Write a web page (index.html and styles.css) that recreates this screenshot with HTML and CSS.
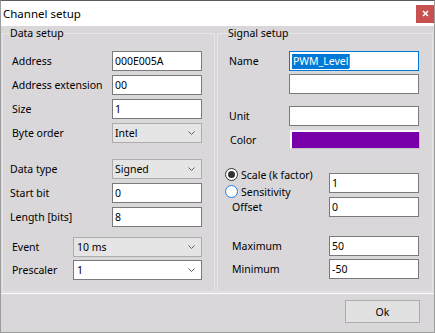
FILE: index.html
```html
<!DOCTYPE html>
<html lang="en">
<head>
    <meta charset="UTF-8">
    <meta name="viewport" content="width=device-width, initial-scale=1.0">
    <title>Channel setup</title>
    <link rel="stylesheet" href="styles.css">
</head>
<body>

    <div class="window">
        <div class="titlebar">
            <span class="title">Channel setup</span>
            <span class="close">
                <svg width="7" height="7" viewBox="0 0 7 7"><path d="M1 1 L6 6 M6 1 L1 6" stroke="#fff" stroke-width="1.6" fill="none"/></svg>
            </span>
        </div>

        <div class="content">
            <fieldset class="group group-data">
                <legend>Data setup</legend>

                <div class="section sec-address">
                    <div class="row"><label>Address</label><div class="field">000E005A</div></div>
                    <div class="row"><label>Address extension</label><div class="field">00</div></div>
                    <div class="row"><label>Size</label><div class="field">1</div></div>
                    <div class="row"><label>Byte order</label><div class="combo"><span>Intel</span><svg width="7" height="4"><path d="M0.5 0.5 L3.5 3.5 L6.5 0.5" stroke="#606060" fill="none"/></svg></div></div>
                </div>

                <div class="section sec-type">
                    <div class="row"><label>Data type</label><div class="combo"><span>Signed</span><svg width="7" height="4"><path d="M0.5 0.5 L3.5 3.5 L6.5 0.5" stroke="#606060" fill="none"/></svg></div></div>
                    <div class="row"><label>Start bit</label><div class="field">0</div></div>
                    <div class="row"><label>Length [bits]</label><div class="field">8</div></div>
                </div>

                <div class="section sec-event">
                    <div class="row"><label>Event</label><div class="combo wide"><span>10 ms</span><svg width="7" height="4"><path d="M0.5 0.5 L3.5 3.5 L6.5 0.5" stroke="#606060" fill="none"/></svg></div></div>
                    <div class="row"><label>Prescaler</label><div class="combo wide editable"><span>1</span><svg width="7" height="4"><path d="M0.5 0.5 L3.5 3.5 L6.5 0.5" stroke="#606060" fill="none"/></svg></div></div>
                </div>
            </fieldset>

            <fieldset class="group group-signal">
                <legend>Signal setup</legend>

                <div class="section sec-name">
                    <div class="row"><label>Name</label><div class="field focused"><span class="selected">PWM_Level</span><span class="caret"></span></div></div>
                    <div class="row"><label></label><div class="field"></div></div>
                </div>

                <div class="section sec-unit">
                    <div class="row"><label>Unit</label><div class="field"></div></div>
                    <div class="row color-row"><label>Color</label><div class="swatch"></div></div>
                </div>

                <div class="scale-block">
                    <div class="radios">
                        <div class="radio-row"><span class="radio checked"></span>Scale (k factor)</div>
                        <div class="radio-row"><span class="radio hover"></span>Sensitivity</div>
                    </div>
                    <div class="field small">1</div>
                </div>

                <div class="section sec-offset">
                    <div class="row"><label>Offset</label><div class="field small">0</div></div>
                </div>

                <div class="section sec-limits">
                    <div class="row"><label>Maximum</label><div class="field small">50</div></div>
                    <div class="row"><label>Minimum</label><div class="field small">-50</div></div>
                </div>
            </fieldset>
        </div>

        <div class="footer">
            <button class="ok">Ok</button>
        </div>
    </div>

</body>
</html>
```

FILE: styles.css
```css
/* General styling */
body {
    margin: 0;
    font-family: "Noto Sans", sans-serif;
    font-size: 10.5px;
    color: #000;
    background-color: #d9d7d9;
}

.window {
    width: 435px;
    height: 333px;
    box-sizing: border-box;
    border: 1px solid #9c9c9c;
    border-top-color: #5c5c5c;
    background-color: #d9d7d9;
    display: flex;
    flex-direction: column;
}

/* Title bar */
.titlebar {
    height: 25px;
    flex: none;
    background: #fff;
    display: flex;
    align-items: center;
    justify-content: space-between;
    padding-left: 2px;
}

.title {
    font-size: 11.5px;
}

.close {
    width: 18px;
    height: 18px;
    background: #c75050;
    display: flex;
    align-items: center;
    justify-content: center;
}

/* Group boxes */
.content {
    height: 267px;
    flex: none;
    display: flex;
    gap: 2px;
    padding-left: 1px;
    box-sizing: border-box;
}

.group {
    margin: 0;
    padding: 0;
    min-width: 0;
    height: 266px;
    box-sizing: border-box;
    border: 1px solid #e7e5e7;
}

.group-data {
    width: 213px;
}

.group-signal {
    width: 216px;
}

.group legend {
    margin-left: 6px;
    padding: 0 1px;
    line-height: 14px;
}

.group-signal legend {
    margin-left: 9px;
}

.section {
    display: flex;
    flex-direction: column;
    gap: 4px;
}

.row {
    display: flex;
    align-items: center;
    height: 20px;
}

.row label {
    flex: none;
}

/* Data setup rows */
.group-data .row label {
    width: 100px;
    padding-left: 9px;
}

.sec-address {
    margin-top: 11px;
}

.sec-type {
    margin-top: 16px;
}

.group-data .sec-type .row label {
    width: 102px;
    padding-left: 7px;
}

.sec-event {
    margin-top: 10px;
    gap: 3px;
}

.group-data .sec-event .row label {
    width: 61px;
}

/* Inputs */
.field,
.combo {
    width: 90px;
    height: 20px;
    box-sizing: border-box;
    border: 1px solid #7a7a7a;
    background: #fff;
    padding: 0 2px;
    line-height: 18px;
    display: flex;
    align-items: center;
}

.combo {
    justify-content: space-between;
    padding-right: 6px;
    border-color: #adadad;
    background: #e5e5e5;
}

.combo.wide {
    width: 129px;
    padding-left: 3px;
}

.combo.editable {
    background: #fff;
    border-color: #7a7a7a;
}

.field.focused {
    border-color: #0078d7;
}

.selected {
    background: #0078d7;
    color: #fff;
    padding: 0 1px 0 1px;
    line-height: 15px;
}

.caret {
    width: 1px;
    height: 14px;
    background: #d5741f;
}

/* Signal setup rows */
.group-signal .row label {
    width: 60px;
    padding-left: 11px;
}

.group-signal .field {
    width: 130px;
}

.sec-name {
    margin-top: 11px;
    gap: 3px;
}

.sec-unit {
    margin-top: 12px;
}

.color-row {
    height: 19px;
}

.group-signal .color-row label {
    padding-left: 12px;
}

.swatch {
    width: 130px;
    height: 19px;
    box-sizing: border-box;
    background: #7900a8;
    border-top: 2px solid #fbfbfb;
    border-left: 2px solid #fbfbfb;
    border-right: 1px solid #c4c2c4;
    border-bottom: 1px solid #c4c2c4;
}

.scale-block {
    display: flex;
    margin-top: 17px;
}

.radios {
    flex: none;
    width: 111px;
    height: 31px;
    padding-left: 7px;
    box-sizing: border-box;
}

.radio-row {
    height: 17px;
    display: flex;
    align-items: center;
    gap: 3px;
}

.radio {
    width: 13px;
    height: 13px;
    box-sizing: border-box;
    border-radius: 50%;
    border: 1px solid #333;
    background: #fff;
    display: flex;
    align-items: center;
    justify-content: center;
}

.radio.checked::after {
    content: "";
    width: 7px;
    height: 7px;
    border-radius: 50%;
    background: #333;
}

.radio.hover {
    border-color: #1e7fd8;
}

.group-signal .field.small {
    width: 90px;
}

.scale-block .field {
    margin-top: 7px;
}

.group-signal .sec-offset .row label,
.group-signal .sec-limits .row label {
    width: 97px;
    padding-left: 14px;
}

.sec-limits {
    margin-top: 19px;
    gap: 3px;
}

/* Footer */
.footer {
    flex: 1;
    border-top: 1px solid #fff;
    display: flex;
    justify-content: flex-end;
    align-items: flex-start;
    padding: 6px 14px 0 0;
}

.ok {
    width: 75px;
    height: 23px;
    margin: 0;
    background: #e1e1e1;
    border: 1px solid #adadad;
    font-family: "Noto Sans", sans-serif;
    font-size: 10.5px;
    color: #000;
    padding: 0;
}
```
